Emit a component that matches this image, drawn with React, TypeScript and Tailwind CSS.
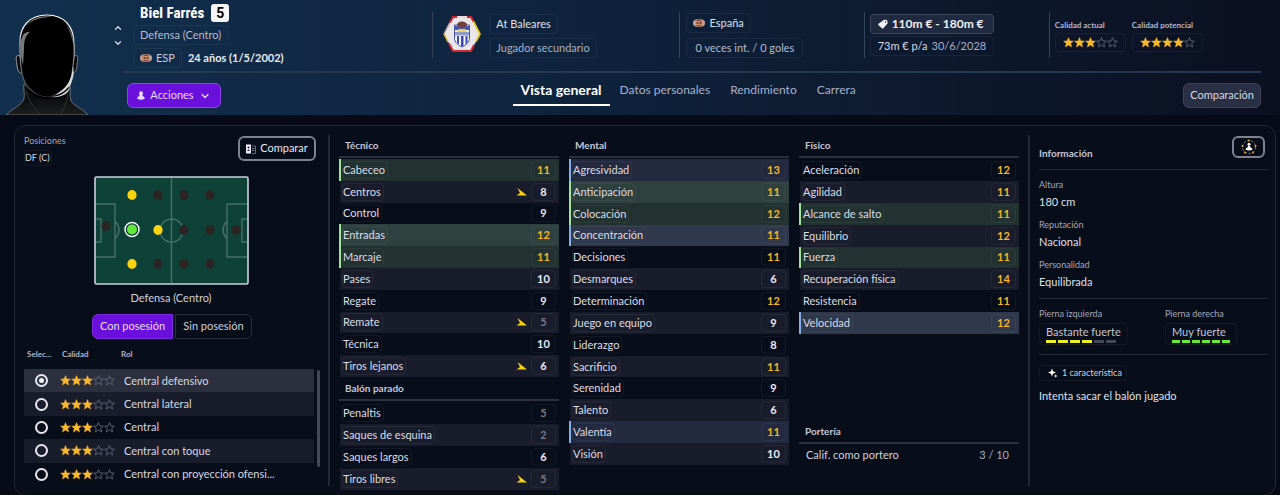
import { useState } from "react";
import { ChevronDown, ChevronUp } from "lucide-react";

type Tone = "green" | "blue";

interface Attribute {
  name: string;
  value: number;
  tone?: Tone;
  falling?: boolean;
}

const technical: Attribute[] = [
  { name: "Cabeceo", value: 11, tone: "green" },
  { name: "Centros", value: 8, falling: true },
  { name: "Control", value: 9 },
  { name: "Entradas", value: 12, tone: "green" },
  { name: "Marcaje", value: 11, tone: "green" },
  { name: "Pases", value: 10 },
  { name: "Regate", value: 9 },
  { name: "Remate", value: 5, falling: true },
  { name: "Técnica", value: 10 },
  { name: "Tiros lejanos", value: 6, falling: true },
];

const setPieces: Attribute[] = [
  { name: "Penaltis", value: 5 },
  { name: "Saques de esquina", value: 2 },
  { name: "Saques largos", value: 6 },
  { name: "Tiros libres", value: 5, falling: true },
];

const mental: Attribute[] = [
  { name: "Agresividad", value: 13, tone: "blue" },
  { name: "Anticipación", value: 11, tone: "green" },
  { name: "Colocación", value: 12, tone: "green" },
  { name: "Concentración", value: 11, tone: "blue" },
  { name: "Decisiones", value: 11 },
  { name: "Desmarques", value: 6 },
  { name: "Determinación", value: 12 },
  { name: "Juego en equipo", value: 9 },
  { name: "Liderazgo", value: 8 },
  { name: "Sacrificio", value: 11 },
  { name: "Serenidad", value: 9 },
  { name: "Talento", value: 6 },
  { name: "Valentía", value: 11, tone: "blue" },
  { name: "Visión", value: 10 },
];

const physical: Attribute[] = [
  { name: "Aceleración", value: 12 },
  { name: "Agilidad", value: 11 },
  { name: "Alcance de salto", value: 11, tone: "green" },
  { name: "Equilibrio", value: 12 },
  { name: "Fuerza", value: 11, tone: "green" },
  { name: "Recuperación física", value: 14 },
  { name: "Resistencia", value: 11 },
  { name: "Velocidad", value: 12, tone: "blue" },
];

const roles = [
  "Central defensivo",
  "Central lateral",
  "Central",
  "Central con toque",
  "Central con proyección ofensi...",
];

const tabs = ["Vista general", "Datos personales", "Rendimiento", "Carrera"];

const facts = [
  { label: "Altura", value: "180 cm" },
  { label: "Reputación", value: "Nacional" },
  { label: "Personalidad", value: "Equilibrada" },
];

const pitchDots = [
  { x: 38, y: 19, color: "#fbd40f" },
  { x: 64, y: 19, color: "#2b2424" },
  { x: 90, y: 19, color: "#2b2424" },
  { x: 116, y: 19, color: "#2b2424" },
  { x: 12, y: 50, color: "#2b2424" },
  { x: 64, y: 54, color: "#fbd40f" },
  { x: 90, y: 54, color: "#2b2424" },
  { x: 116, y: 54, color: "#2b2424" },
  { x: 142, y: 54, color: "#2b2424" },
  { x: 38, y: 88, color: "#fbd40f" },
  { x: 64, y: 88, color: "#2b2424" },
  { x: 90, y: 88, color: "#2b2424" },
  { x: 116, y: 88, color: "#2b2424" },
];

function rowColor(tone: Tone | undefined, odd: boolean) {
  if (tone === "green") return odd ? "bg-[#2f413f]" : "bg-[#223230]";
  if (tone === "blue") return odd ? "bg-[#30384b]" : "bg-[#23293e]";
  return odd ? "bg-[#191d2b]" : "";
}

function edgeColor(tone: Tone | undefined) {
  if (tone === "green") return "border-[#a3e29b]";
  if (tone === "blue") return "border-[#86aee8]";
  return "border-transparent";
}

function valueColor(value: number) {
  if (value >= 11) return "text-[#f9b32b]";
  if (value >= 6) return "text-[#eceaf6]";
  return "text-[#777985]";
}

function Stars({ count }: { count: number }) {
  return (
    <span className="flex" role="img" aria-label={`${count} de 5 estrellas`}>
      {[0, 1, 2, 3, 4].map((i) => (
        <svg key={i} className="h-[11px] w-[11px]" viewBox="0 0 22 22">
          <path
            d="M11 1.2l2.7 6.6 7.1.5-5.4 4.6 1.7 6.9L11 16.1l-6.1 3.7 1.7-6.9L1.2 8.3l7.1-.5z"
            fill={i < count ? "#fdb92e" : "none"}
            stroke={i < count ? "#fdb92e" : "#5d6476"}
            strokeWidth={i < count ? 1 : 1.8}
          />
        </svg>
      ))}
    </span>
  );
}

function Flag() {
  return (
    <svg className="h-2 w-3" viewBox="0 0 24 16">
      <rect x="0" y="1" width="24" height="14" rx="7" fill="#b9a8a6" />
      <rect x="4" y="1" width="16" height="14" rx="3" fill="#c98f68" />
      <path d="M5 4q7-6 14 0z" fill="#8c4038" />
      <path d="M5 12q7 5 14 0z" fill="#9c473c" />
      <circle cx="9" cy="8" r="2" fill="#4c3230" />
      <circle cx="15" cy="8" r="2" fill="#4c3230" />
    </svg>
  );
}

function PersonIcon({ className }: { className: string }) {
  return (
    <svg className={className} viewBox="0 0 16 18" fill="currentColor">
      <circle cx="8" cy="4.500" r="4" />
      <path d="M5 8h6l.5 2.500c2.500.6 4 2 4 3.700 0 2-3.200 3.300-7.500 3.300S.5 16.200.5 14.200c0-1.700 1.500-3.100 4-3.700z" />
    </svg>
  );
}

function Portrait() {
  return (
    <svg className="h-[101px] w-24" viewBox="0 14 96 101" role="img" aria-label="Biel Farrés">
      <defs>
        <linearGradient id="rim" x1="0" y1="0" x2="0" y2="1">
          <stop offset="0" stopColor="#ffffff" />
          <stop offset="0.3" stopColor="#c9ced3" />
          <stop offset="0.65" stopColor="#6d747b" />
          <stop offset="1" stopColor="#33373b" />
        </linearGradient>
        <linearGradient id="collar" x1="0" y1="0" x2="0" y2="1">
          <stop offset="0" stopColor="#24282b" />
          <stop offset="0.4" stopColor="#0a0b0c" />
          <stop offset="1" stopColor="#1c1e20" />
        </linearGradient>
      </defs>
      <path
        d="M24 84c-1 6 1 9 0 15-3 7-11 9-18 16h82c-5-6-14-9-17-14-2-6 0-11-1-16z"
        fill="url(#collar)"
        stroke="#8b8f93"
        strokeWidth="0.7"
      />
      <path d="M20 56c-5-2-4 3-3 8 0 6 2 10 6 9z" fill="#080808" stroke="#b9bec2" strokeWidth="0.8" />
      <path d="M74 56c5-2 4 3 3 8 0 6-2 10-6 9z" fill="#080808" stroke="#8f959a" strokeWidth="0.8" />
      <path
        d="M47 15c-17 0-28 11-27 29 0 8 0 15 1 23 1 10 3 16 8 21 5 6 12 9 18 9s14-4 19-9c5-6 6-13 7-22 1-8 2-14 1-22C74 26 64 15 47 15z"
        fill="#010101"
        stroke="url(#rim)"
        strokeWidth="1.200"
      />
      <path d="M21 48c-1-12 3-17 9-16-5 4-6 9-6 17l-1 16c-2-5-2-11-2-17z" fill="#c4c9cd" opacity="0.6" />
      <path d="M26 26c7-9 18-11 27-9-12 0-20 2-27 9z" fill="#ffffff" opacity="0.5" />
      <path d="M65 24c6 5 8 11 8 19-2-8-3-14-8-19z" fill="#dfe2e4" opacity="0.5" />
      <path d="M73 66c-1 14-6 22-18 29 9-2 15-6 17-14 2-5 2-10 1-15z" fill="#ffffff" opacity="0.8" />
      <path d="M24 86c6 4 12 10 22 11 10 0 18-4 23-11-2 9-9 13-20 13-12 0-20-5-25-13z" fill="#000" />
      <path d="M50 97c9 0 16-4 20-10-1 7-9 11-20 10z" fill="#d5d8da" />
      <path d="M26 92c3 10 9 17 15 23M68 95c-1 8-4 13-8 20" stroke="#2f3235" strokeWidth="1" fill="none" />
    </svg>
  );
}

function Crest() {
  return (
    <svg className="h-9 w-[38px]" viewBox="0 0 76 72" role="img" aria-label="Escudo">
      <path d="M20 2h36l18 34-18 34H20L2 36z" fill="#e9e7ea" />
      <path d="M14 13L20 2h36l5 9" fill="none" stroke="#d2232a" strokeWidth="4" />
      <path d="M28 2h20" stroke="#ecdcdc" strokeWidth="4" />
      <path d="M2 36l12-23" stroke="#c5a9aa" strokeWidth="3" />
      <path d="M61 11l13 25-8 15" fill="none" stroke="#e7c61f" strokeWidth="3.500" />
      <path d="M62 58l-6 12H20l-8-15" fill="none" stroke="#cf2830" strokeWidth="4" />
      <path d="M2 36l8 16" stroke="#e0b836" strokeWidth="3" />
      <path d="M23 18h30v26c0 9-7 14-15 18-8-4-15-9-15-18z" fill="#f4f4fb" stroke="#4954a8" strokeWidth="2" />
      <path d="M28 40h4v17l-4-4zM36 40h5v21h-5zM45 40h4v13l-4 4z" fill="#3e4ba8" />
      <rect x="24" y="32" width="28" height="7" fill="#8f9cc9" />
      <rect x="24" y="20" width="28" height="8" fill="#4a59ad" />
      <path d="M28 32c1-7 5-6 10-6s9-1 10 6z" fill="#ead35c" />
      <ellipse cx="38" cy="17" rx="10" ry="6" fill="#74403c" />
    </svg>
  );
}

function FallingArrow() {
  return (
    <svg className="h-2 w-[11px]" viewBox="0 0 22 16" role="img" aria-label="Bajando">
      <path d="M3 0l19 15H1l7-5z" fill="#f8d210" />
    </svg>
  );
}

function Pitch() {
  return (
    <svg className="mx-auto h-[109px] w-[155px]" viewBox="0 0 155 109" role="img" aria-label="Posiciones en el campo">
      <rect x="1" y="1" width="153" height="107" rx="1.500" fill="#0e4238" stroke="#c9d3da" strokeWidth="1.600" />
      <g fill="none" stroke="#47706b" strokeWidth="1.400">
        <path d="M77.500 2v105M2 28h19v53H2M2 43h5v23H2M153 28h-20v53h20M153 43h-5v23h5" />
        <circle cx="77.500" cy="54.500" r="11.500" />
        <path d="M21 45q8 9 0 18M133 45q-8 9 0 18" />
      </g>
      {pitchDots.map((dot) => (
        <ellipse key={`${dot.x}-${dot.y}`} cx={dot.x} cy={dot.y} rx="4.600" ry="5" fill={dot.color} />
      ))}
      <circle cx="38" cy="53.500" r="7" fill="#0e3a35" stroke="#f2f5f6" strokeWidth="1.500" />
      <circle cx="38" cy="53.500" r="5" fill="#66e83b" />
    </svg>
  );
}

function SectionTitle({ children }: { children: string }) {
  return (
    <h2 className="border-b-2 border-[#2c303d] px-1.5 pb-0.5 text-[10px] leading-[18px] font-bold text-[#c4c6d8]">
      {children}
    </h2>
  );
}

function AttributeTable({ label, rows, height }: { label: string; rows: Attribute[]; height: string }) {
  return (
    <table className={`mt-px w-full border-collapse ${height}`} aria-label={label}>
      <tbody>
        {rows.map((row, i) => (
          <tr key={row.name} className={rowColor(row.tone, i % 2 === 1)}>
            <th scope="row" className={`border-l-2 p-0 pl-px text-left font-normal ${edgeColor(row.tone)}`}>
              <span className="block w-fit rounded-sm border border-white/5 pr-0.5 text-[11px] leading-4 text-[#dcdde6]">
                {row.name}
              </span>
            </th>
            <td className="p-0 pr-[3px]">
              <div className="flex items-center justify-end gap-1">
                {row.falling && <FallingArrow />}
                <span
                  className={`w-[25px] rounded-sm border border-white/5 text-center text-[11px] leading-4 font-bold ${valueColor(row.value)}`}
                >
                  {row.value}
                </span>
              </div>
            </td>
          </tr>
        ))}
      </tbody>
    </table>
  );
}

function Foot({ label, rating, filled, color, bar }: { label: string; rating: string; filled: number; color: string; bar: string }) {
  return (
    <div>
      <p className="text-[9px] leading-3 text-[#a4a6b8]">{label}</p>
      <div className="mt-[3px] h-[22px] w-fit rounded-sm border border-white/5 px-1.5">
        <p className="text-[11px] leading-4 text-[#c3c4d2]">{rating}</p>
        <div className="flex gap-0.5">
          {[0, 1, 2, 3, 4, 5].map((i) => (
            <span key={i} className={`h-[3px] ${bar} ${i < filled ? color : "bg-[#454955]"}`} />
          ))}
        </div>
      </div>
    </div>
  );
}

function Header() {
  return (
    <header className="flex bg-linear-to-r from-[#12304e] via-[#0e213a] to-[#0b1021]">
      <div className="flex w-28 shrink-0 items-end">
        <Portrait />
      </div>
      <div className="flex w-3 shrink-0 flex-col items-center gap-[5px] pt-[23px] text-[#d7dde8]">
        <button aria-label="Jugador anterior">
          <ChevronUp className="h-2.5 w-2.5" strokeWidth={3} />
        </button>
        <button aria-label="Jugador siguiente">
          <ChevronDown className="h-2.5 w-2.5" strokeWidth={3} />
        </button>
      </div>

      <div className="mr-[19px] flex-1">
        <div className="grid h-[73px] grid-cols-[308fr_247fr_184fr_185fr_212fr] border-b-2 border-[#26384f]">
          <div className="flex flex-col items-start gap-[3px] pt-1 pl-[9px]">
            <div className="flex items-center gap-[7px] pl-[7px]">
              <h1 className="font-['Liberation_Sans_Narrow','Roboto_Condensed','Roboto',sans-serif] text-[15px] leading-[18px] font-bold text-white">
                Biel Farrés
              </h1>
              <span className="w-[18px] rounded-[3px] bg-[#f6f6f6] text-center font-['Roboto',sans-serif] text-sm leading-[18px] font-bold text-black">
                5
              </span>
            </div>
            <span className="rounded-sm border border-white/5 px-1.5 text-[11px] leading-[18px] text-[#b5bcd0]">
              Defensa (Centro)
            </span>
            <div className="flex items-center gap-1.5">
              <span className="flex items-center gap-1 rounded-sm border border-white/5 px-1.5 text-[11px] leading-[18px] text-[#c8cddd]">
                <Flag />
                ESP
              </span>
              <span className="text-[11px] leading-[18px] font-bold text-[#e8eaf3]">24 años (1/5/2002)</span>
            </div>
          </div>

          <div className="mt-3 mb-[13px] flex gap-2 border-l border-[#34455b] pl-2.5">
            <div className="pt-1">
              <Crest />
            </div>
            <div className="flex flex-col items-start gap-1 pt-[2px]">
              <span className="rounded-sm border border-white/5 px-1.5 text-[11px] leading-[18px] text-[#dfe2ec]">At Baleares</span>
              <span className="rounded-sm border border-white/5 px-1.5 text-[11px] leading-[18px] text-[#a9b0c8]">
                Jugador secundario
              </span>
            </div>
          </div>

          <div className="mt-3 mb-[13px] flex flex-col items-start gap-[5px] border-l border-[#34455b] pt-px pl-1.5">
            <span className="flex items-center gap-1 rounded-sm border border-white/5 px-1.5 text-[11px] leading-[18px] text-[#dfe2ec]">
              <Flag />
              España
            </span>
            <span className="rounded-sm border border-white/5 px-2 text-[11px] leading-[18px] text-[#b5bcd0]">0 veces int. / 0 goles</span>
          </div>

          <div className="mt-3 mb-[13px] flex border-l border-[#34455b] pt-[2px] pl-[5px]">
            <div className="flex flex-col gap-0.5">
              <span className="flex items-center gap-1 rounded-sm border border-[#3d485d] bg-[#1f2a40] px-1 pl-[7px] text-[12px] leading-[18px] font-bold text-[#f0f1f7]">
                <svg className="h-2.5 w-2.5" viewBox="0 0 20 20" fill="currentColor">
                  <path
                    d="M12 1.500L18 2l1.500 6.500-9 10a2 2 0 0 1-2.800.2L1.200 12.500a2 2 0 0 1 0-2.800zM15 4.500a1.500 1.500 0 1 0 0 3 1.500 1.500 0 0 0 0-3z"
                    fillRule="evenodd"
                  />
                </svg>
                110m € - 180m €
              </span>
              <span className="flex gap-1 rounded-sm border border-white/5 px-[7px] text-[11px] leading-[18px] text-[#a9b0c8]">
                <span className="text-[#dcdde8]">73m € p/a</span>
                30/6/2028
              </span>
            </div>
          </div>

          <div className="mt-3 mb-[13px] flex items-start gap-1.5 border-l border-[#34455b] pt-1.5 pl-[5px]">
            <div>
              <p className="text-[8px] leading-[15px] font-bold text-[#b4b9cc]">Calidad actual</p>
              <div className="w-fit rounded-sm border border-white/5 px-[7px] py-[3px]">
                <Stars count={3} />
              </div>
            </div>
            <div>
              <p className="text-[8px] leading-[15px] font-bold text-[#b4b9cc]">Calidad potencial</p>
              <div className="w-fit rounded-sm border border-white/5 px-[7px] py-[3px]">
                <Stars count={4} />
              </div>
            </div>
          </div>
        </div>

        <div className="grid grid-cols-[34%_1fr_auto] items-start pt-2.5 pb-[7px] pl-[3px]">
          <button className="flex h-[25px] w-[94px] items-center justify-center gap-[5px] rounded-md border border-[#9045ea] bg-[#6a0fdc] text-[11px] text-[#e6dcfb]">
            <PersonIcon className="h-[9px] w-2" />
            Acciones
            <ChevronDown className="h-3 w-3" strokeWidth={2.5} />
          </button>
          <nav className="flex items-start">
            {tabs.map((tab, i) => (
              <a
                key={tab}
                href="#"
                className={
                  i === 0
                    ? "border-b-2 border-white px-2 pb-[7px] text-sm leading-[14px] font-bold text-white"
                    : "px-2.5 text-xs leading-[14px] text-[#a9b0ca]"
                }
              >
                {tab}
              </a>
            ))}
          </nav>
          <button className="h-[25px] rounded-md border border-[#3e4456] bg-[#2a3043] px-1.5 text-[11px] text-[#d6d8e2]">Comparación</button>
        </div>
      </div>
    </header>
  );
}

function Positions() {
  const [phase, setPhase] = useState("con");
  const [role, setRole] = useState(0);

  return (
    <section className="my-[9px] border-r-2 border-[#242834] pt-px pl-[9px]">
      <div className="flex items-start justify-between pr-3">
        <div>
          <p className="text-[9px] leading-[10px] text-[#a4a6b8]">Posiciones</p>
          <span className="mt-1 block w-fit rounded-sm border border-white/5 pr-px text-[9px] leading-[14px] text-[#d8d9e3]">DF (C)</span>
        </div>
        <button className="flex h-[25px] w-[78px] items-center justify-center gap-1 rounded-md border-2 border-[#7f8290] text-[11px] text-[#e6e6ee]">
          <svg className="h-2.5 w-2.5" viewBox="0 0 20 20">
            <path d="M0 1h10v18H0z" fill="#eeeef6" />
            <circle cx="5" cy="7" r="2" fill="#161a28" />
            <path d="M2 14q3-6 6 0z" fill="#161a28" />
            <path d="M12 4h7v15h-7" fill="none" stroke="#7d8090" strokeWidth="1.600" />
            <path d="M12 9h5M12 13h5" stroke="#7d8090" strokeWidth="2" />
          </svg>
          Comparar
        </button>
      </div>

      <div className="mt-2.5 pr-2.5">
        <Pitch />
        <p className="mt-[5px] text-center text-[11px] leading-4 text-[#cfd0dc]">Defensa (Centro)</p>
      </div>

      <div className="mt-2 flex justify-center gap-0.5 pr-2 text-[11px]">
        <button
          onClick={() => setPhase("con")}
          className={`h-[25px] w-[81px] rounded-l-md border ${phase === "con" ? "border-[#7c2be2] bg-[#6a0fdc] text-[#eadffc]" : "border-[#2a2e3b] text-[#cfd0dc]"}`}
        >
          Con posesión
        </button>
        <button
          onClick={() => setPhase("sin")}
          className={`h-[25px] w-[77px] rounded-r-md border ${phase === "sin" ? "border-[#7c2be2] bg-[#6a0fdc] text-[#eadffc]" : "border-[#2a2e3b] text-[#cfd0dc]"}`}
        >
          Sin posesión
        </button>
      </div>

      <div className="flex gap-[3px] pr-2">
        <table className="h-[147px] flex-1 table-fixed border-collapse">
          <thead>
            <tr className="h-[30px] text-left text-[8px] font-bold text-[#b4b6c8]">
              <th className="w-9 p-0 pl-[3px]">Selec...</th>
              <th className="w-16 p-0 pl-0.5">Calidad</th>
              <th className="p-0">
                <span className="-ml-[3px]">Rol</span>
              </th>
            </tr>
          </thead>
          <tbody>
            {roles.map((name, i) => (
              <tr key={name} className={`h-[23px] ${i === role ? "bg-[#2c303e]" : i % 2 === 1 ? "bg-[#191d2b]" : ""}`}>
                <td className="p-0 pl-[11px]">
                  <input
                    id={`role-${i}`}
                    type="radio"
                    name="role"
                    checked={i === role}
                    onChange={() => setRole(i)}
                    className="block h-[13px] w-[13px] appearance-none rounded-full border-2 border-[#e8e8ee] p-0.5 checked:bg-[#f4f4f8] checked:bg-clip-content"
                  />
                </td>
                <td className="p-0">
                  <Stars count={3} />
                </td>
                <td className="p-0">
                  <label htmlFor={`role-${i}`} className="block text-[11px] leading-4 whitespace-nowrap text-[#d6d7e1]">
                    {name}
                  </label>
                </td>
              </tr>
            ))}
          </tbody>
        </table>
        <div className="mt-[31px] h-[97px] w-[3px] rounded-full bg-[#454954]" />
      </div>
    </section>
  );
}

function Information() {
  return (
    <section className="my-[9px] mr-[7px] ml-[9px] border-l-2 border-[#242834] pl-[9px]">
      <div className="flex h-[35px] items-start justify-between border-b border-[#272b37] pt-px pr-[3px]">
        <h2 className="pt-[9px] text-[10px] leading-4 font-bold text-[#c4c6d8]">Información</h2>
        <button aria-label="Ver jugador" className="flex h-[22px] w-[33px] items-center justify-center rounded-md border-2 border-[#7f8290] text-white">
          <svg className="h-4 w-4" viewBox="0 0 32 32">
            <circle cx="16" cy="16" r="13" fill="none" stroke="#777b88" strokeWidth="2" strokeDasharray="5 3" />
            <g fill="#f2b02c">
              <circle cx="16" cy="3" r="2" />
              <circle cx="29" cy="14" r="2" />
              <circle cx="3" cy="14" r="2" />
              <circle cx="8" cy="27" r="2" />
              <circle cx="24" cy="27" r="2" />
            </g>
            <circle cx="16" cy="10.500" r="3" fill="#fff" />
            <path d="M14 14h4l1 3q4 1 4 4-7 4-14 0 0-3 4-4z" fill="#fff" />
          </svg>
        </button>
      </div>

      <dl className="flex flex-col gap-2.5 border-b border-[#272b37] pt-[9px] pb-[9px]">
        {facts.map((fact) => (
          <div key={fact.label}>
            <dt className="text-[9px] leading-3 text-[#a4a6b8]">{fact.label}</dt>
            <dd className="mt-1 text-[11px] leading-[14px] text-[#dfe0e8]">{fact.value}</dd>
          </div>
        ))}
      </dl>

      <div className="grid grid-cols-[55%_45%] border-b border-[#272b37] py-[9px]">
        <Foot label="Pierna izquierda" rating="Bastante fuerte" filled={4} color="bg-[#eaf022]" bar="w-2.5" />
        <Foot label="Pierna derecha" rating="Muy fuerte" filled={6} color="bg-[#66e83b]" bar="w-2" />
      </div>

      <span className="mt-2.5 flex w-fit items-center gap-1 rounded-sm border border-white/5 px-1 pl-2 text-[9px] leading-[14px] text-[#cfd0dc]">
        <svg className="h-2.5 w-2.5" viewBox="0 0 20 20" fill="#fff">
          <path d="M8 1l2 5.500L16 9l-6 2.500L8 17l-2-5.500L0 9l6-2.500zM15.500 12.500l1.200 2.300 2.300 1.200-2.300 1.200-1.200 2.300-1.200-2.300-2.300-1.200 2.300-1.200z" />
        </svg>
        1 característica
      </span>
      <p className="mt-[7px] text-[11px] leading-4 text-[#dfe0e8]">Intenta sacar el balón jugado</p>
    </section>
  );
}

function App() {
  return (
    <div className="min-h-screen bg-[#070a17] font-['Lato',sans-serif]">
      <Header />
      <main className="mt-2.5 mr-1 ml-3.5 grid grid-cols-[315fr_229fr_230fr_230fr_256fr] rounded-xl border border-[#242834] bg-[#080d1a]">
        <Positions />
        <section className="pt-2.5 pb-1 pl-[9px]">
          <SectionTitle>Técnico</SectionTitle>
          <AttributeTable label="Técnico" rows={technical} height="h-[218px]" />
          <div className="mt-0.5">
            <SectionTitle>Balón parado</SectionTitle>
            <AttributeTable label="Balón parado" rows={setPieces} height="h-[88px]" />
          </div>
        </section>
        <section className="pt-2.5 pl-2.5">
          <SectionTitle>Mental</SectionTitle>
          <AttributeTable label="Mental" rows={mental} height="h-[306px]" />
        </section>
        <section className="flex flex-col justify-between pt-2.5 pb-8 pl-2.5">
          <div>
            <SectionTitle>Físico</SectionTitle>
            <AttributeTable label="Físico" rows={physical} height="h-[175px]" />
          </div>
          <div>
            <SectionTitle>Portería</SectionTitle>
            <div className="flex justify-between pt-[3px] pr-2.5 pl-[7px] text-[11px] leading-4">
              <span className="text-[#d0d1dc]">Calif. como portero</span>
              <span className="text-[#a9abbc]">3 / 10</span>
            </div>
          </div>
        </section>
        <Information />
      </main>
    </div>
  );
}

export default App;
